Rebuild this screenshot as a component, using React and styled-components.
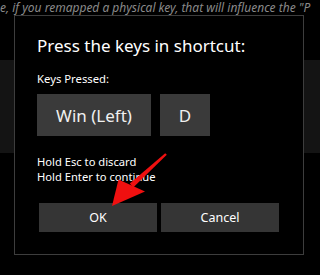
import React from "react";
import styled, { createGlobalStyle } from "styled-components";

const Global = createGlobalStyle`
  html, body { margin: 0; padding: 0; background: #000; overflow: hidden; }
  body { font-family: "Noto Sans", "Open Sans", sans-serif; }
`;

const Page = styled.div`
  position: relative;
  width: 320px;
  height: 275px;
  background: #000;
  display: flex;
  flex-direction: column;
  overflow: hidden;
`;

const TopText = styled.div`
  height: 15px;
  font-size: 12px;
  line-height: 15px;
  font-style: italic;
  color: #8a8a8a;
  white-space: nowrap;
`;

const Band = styled.div`
  margin-top: 45px;
  height: 93px;
  background: #141414;
`;

const Dialog = styled.div`
  position: absolute;
  left: 14px;
  top: 15px;
  width: 290px;
  height: 240px;
  box-sizing: border-box;
  border: 1px solid #3d3d3d;
  background: #000;
  padding: 0 0 0 22px;
  display: flex;
  flex-direction: column;
  color: #fff;
`;

const Title = styled.div`
  margin-top: 18px;
  font-size: 17px;
  line-height: 24px;
  color: #fff;
`;

const Label = styled.div`
  margin-top: 13px;
  font-size: 11.3px;
  line-height: 15px;
  color: #fff;
`;

const Keys = styled.div`
  display: flex;
  gap: 9px;
  margin-top: 8px;
`;

const Key = styled.div`
  width: ${(p) => p.$w}px;
  height: 42px;
  background: #3a3a3a;
  display: flex;
  align-items: center;
  justify-content: center;
  font-size: 17px;
  color: #f0f0f0;
`;

const Hints = styled.div`
  margin-top: 18px;
  font-size: 11.2px;
  line-height: 15px;
  color: #fff;
`;

const Buttons = styled.div`
  display: flex;
  gap: 4px;
  margin-top: 19px;
  margin-left: 2px;
`;

const Button = styled.div`
  width: 118px;
  height: 29px;
  background: #353535;
  display: flex;
  align-items: center;
  justify-content: center;
  font-size: 12.5px;
  color: #fff;
`;

const Arrow = styled.svg`
  position: absolute;
  left: 0;
  top: 0;
  width: 320px;
  height: 275px;
  pointer-events: none;
`;

export default function App() {
  return (
    <>
      <Global />
      <Page>
        <TopText>e, if you remapped a physical key, that will influence the "P</TopText>
        <Band />
        <Dialog>
          <Title>Press the keys in shortcut:</Title>
          <Label>Keys Pressed:</Label>
          <Keys>
            <Key $w={114}>Win (Left)</Key>
            <Key $w={50}>D</Key>
          </Keys>
          <Hints>
            <div>Hold Esc to discard</div>
            <div>Hold Enter to continue</div>
          </Hints>
          <Buttons>
            <Button>OK</Button>
            <Button>Cancel</Button>
          </Buttons>
        </Dialog>
        <Arrow viewBox="0 0 320 275">
          <polygon points="166.8,154.8 165.2,153.2 129.8,183.6 133.2,187.4" fill="#f01010" />
          <polygon points="112,206 118.5,179.5 145,191.5" fill="#f01010" />
        </Arrow>
      </Page>
    </>
  );
}
